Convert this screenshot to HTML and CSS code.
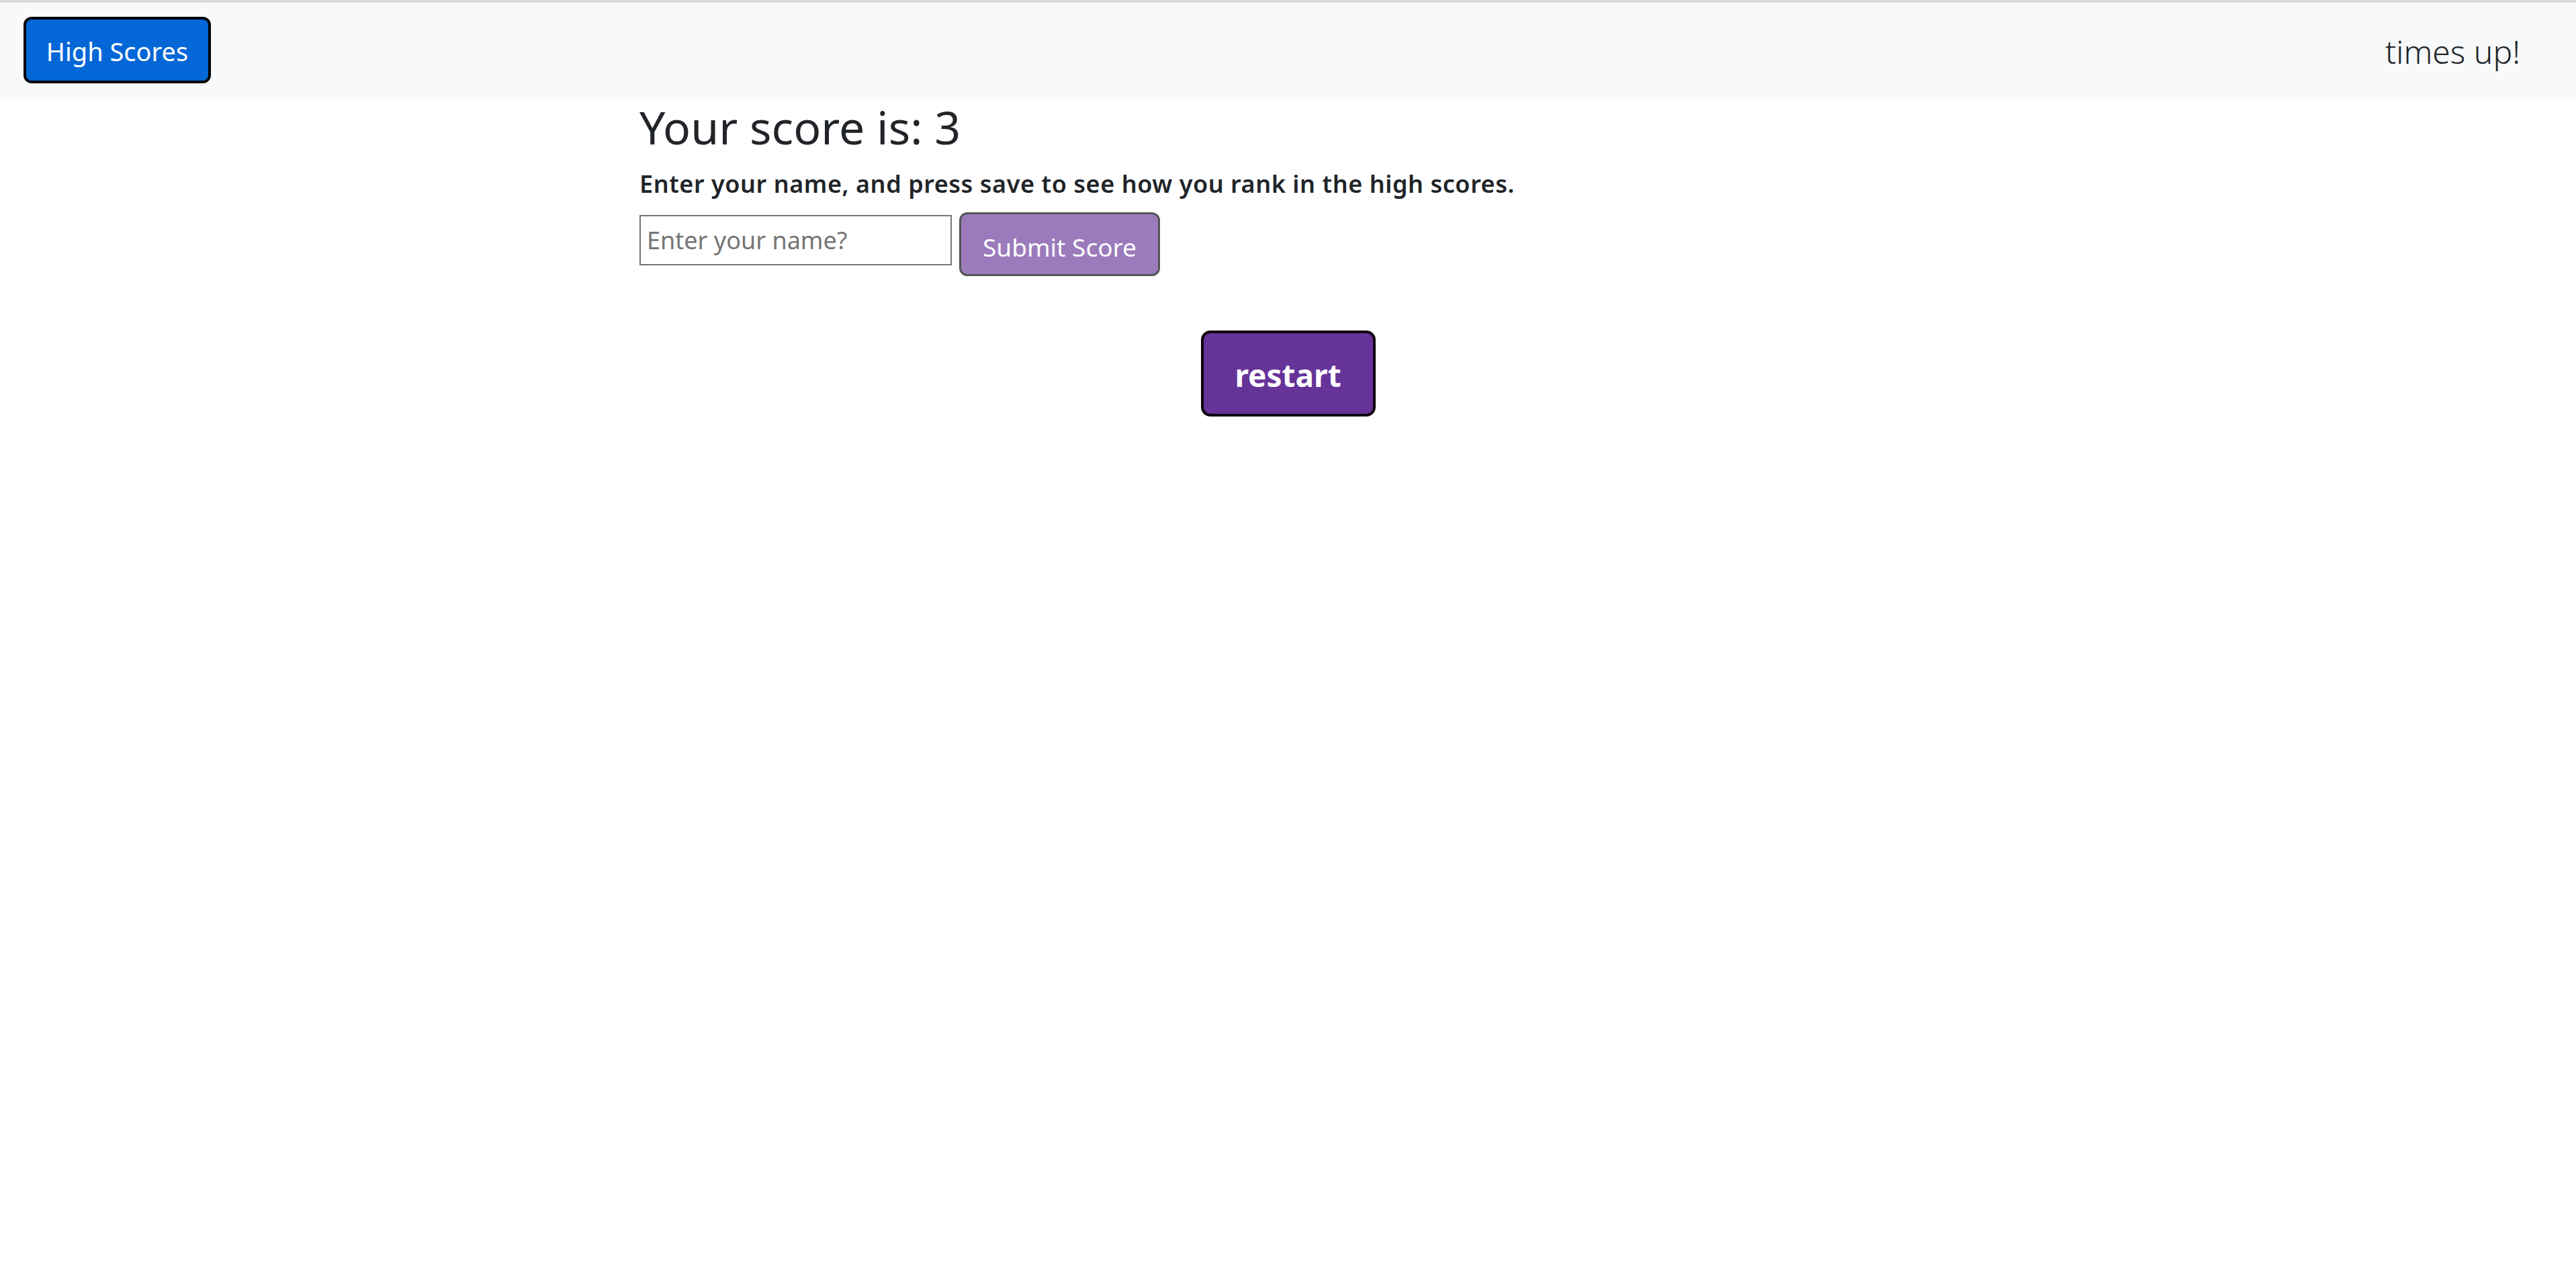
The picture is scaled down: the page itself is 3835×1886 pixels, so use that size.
FILE: index.html
```html
<!DOCTYPE html>
<html lang="en">
<head>
<meta charset="utf-8">
<title>Quiz</title>
<link rel="stylesheet" href="styles.css">
</head>
<body>
<nav class="navbar">
  <button class="btn-scores" type="button">High Scores</button>
  <span class="timer">times up!</span>
</nav>
<main class="content">
  <h2 class="score">Your score is: 3</h2>
  <p class="instructions">Enter your name, and press save to see how you rank in the high scores.</p>
  <form class="save-row">
    <input class="name-input" type="text" placeholder="Enter your name?">
    <button class="btn-submit" type="button">Submit Score</button>
  </form>
  <div class="restart-row">
    <button class="btn-restart" type="button">restart</button>
  </div>
</main>
</body>
</html>
```
FILE: styles.css
```css
html, body {
  margin: 0;
  padding: 0;
  background: #ffffff;
}
body {
  font-family: "Noto Sans", "Open Sans", sans-serif;
  color: #212529;
  border-top: 4px solid #dadada;
}
.navbar {
  display: flex;
  align-items: center;
  justify-content: space-between;
  height: 141px;
  padding: 0 83px 0 35px;
  background: #f8f9fa;
}
.btn-scores {
  width: 279px;
  height: 99px;
  background: #0367d7;
  color: #ffffff;
  border: 4px solid #000000;
  border-radius: 12px;
  font-family: inherit;
  font-size: 38px;
  padding: 2px 0 0 0;
}
.timer {
  padding-top: 4px;
  font-size: 48px;
  font-weight: 300;
  color: #212529;
}
.content {
  width: 1931px;
  margin: 0 auto;
}
.score {
  margin: 3px 0 0 0;
  font-size: 68px;
  font-weight: 400;
  line-height: 1.2;
}
.instructions {
  margin: 17px 0 0 0;
  font-size: 36px;
  font-weight: 600;
  letter-spacing: 0.55px;
  line-height: 1.5;
}
.save-row {
  display: flex;
  align-items: flex-start;
  margin: 15px 0 0 0;
}
.name-input {
  box-sizing: border-box;
  width: 465px;
  height: 75px;
  margin-top: 4px;
  border: 2px solid #767676;
  border-radius: 0;
  padding: 0 9px;
  font-family: inherit;
  font-size: 36px;
  color: #212529;
}
.name-input::placeholder {
  color: #757575;
}
.btn-submit {
  box-sizing: border-box;
  width: 299px;
  height: 95px;
  margin-left: 11px;
  background: #9b7bbc;
  color: #ffffff;
  border: 3px solid #555555;
  border-radius: 12px;
  font-family: inherit;
  font-size: 37px;
  padding: 8px 0 0 0;
}
.restart-row {
  display: flex;
  justify-content: center;
  margin-top: 81px;
}
.btn-restart {
  box-sizing: border-box;
  width: 260px;
  height: 128px;
  background: #663399;
  color: #ffffff;
  border: 4px solid #100010;
  border-radius: 14px;
  font-family: inherit;
  font-size: 46px;
  font-weight: 700;
  padding: 5px 0 0 0;
}
```
